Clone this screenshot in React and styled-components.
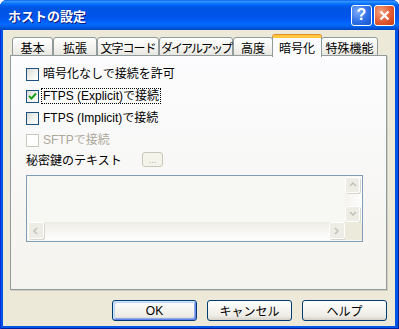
import styled, { createGlobalStyle } from "styled-components";

const GlobalStyle = createGlobalStyle`
  html, body {
    margin: 0;
    padding: 0;
    background: #ffffff;
  }
  body {
    font-family: "Liberation Sans", "Noto Sans CJK JP", sans-serif;
    font-size: 12px;
    color: #000;
  }
`;

const Window = styled.div`
  width: 399px;
  height: 329px;
  display: flex;
  flex-direction: column;
  background: #0055e5;
  border-radius: 7px 7px 0 0;
  box-shadow: inset 1px 0 0 #0831d9, inset -1px 0 0 #001ea0, inset 0 -1px 0 #001ea0;
  overflow: hidden;
`;

const TitleBar = styled.div`
  height: 30px;
  flex: none;
  display: flex;
  align-items: center;
  padding: 0 4px 0 8px;
  background: linear-gradient(
    to bottom,
    #0058ee 0%,
    #3593ff 4%,
    #288eff 7%,
    #127dff 10%,
    #036ffc 14%,
    #0262ee 18%,
    #0057e5 24%,
    #0054e3 30%,
    #0055eb 56%,
    #005bf5 68%,
    #026afe 80%,
    #0062ef 88%,
    #0052d6 94%,
    #0046c0 100%
  );
`;

const Title = styled.div`
  flex: 1;
  color: #fff;
  font-weight: bold;
  font-size: 13px;
  text-shadow: 1px 1px 0 #0a1883;
  padding-top: 1px;
`;

const CaptionButton = styled.div`
  width: 21px;
  height: 21px;
  box-sizing: border-box;
  margin-left: 2px;
  border: 1px solid #fff;
  border-radius: 3px;
  display: flex;
  align-items: center;
  justify-content: center;
  background: ${(p) =>
    p.$close
      ? "radial-gradient(circle at 30% 30%, #f2a27f 0%, #e25b33 55%, #c43b14 100%)"
      : "radial-gradient(circle at 30% 30%, #7faaf7 0%, #2c6fe8 55%, #1752c7 100%)"};
  color: #fff;
  font-weight: bold;
  font-size: 16px;
  font-family: "Liberation Sans", sans-serif;
`;

const Client = styled.div`
  flex: 1;
  margin: 0 4px 3px 3px;
  background: #ece9d8;
  display: flex;
  flex-direction: column;
  padding: 5px 8px 0 7px;
`;

const TabRow = styled.div`
  display: flex;
  align-items: flex-end;
  height: 21px;
  padding-left: 2px;
  position: relative;
  z-index: 1;
  margin-bottom: -1px;
`;

const Tab = styled.div`
  width: ${(p) => p.$w}px;
  box-sizing: border-box;
  height: ${(p) => (p.$active ? 22 : 19)}px;
  margin: ${(p) => (p.$active ? "0 -1px -1px -1px" : "0")};
  display: flex;
  align-items: center;
  justify-content: center;
  white-space: nowrap;
  letter-spacing: ${(p) => p.$ls || 0}px;
  border: 1px solid #919b9c;
  border-bottom: ${(p) => (p.$active ? "none" : "1px solid #919b9c")};
  border-top: ${(p) => (p.$active ? "3px solid #ffc83c" : "1px solid #919b9c")};
  border-radius: 3px 3px 0 0;
  background: ${(p) =>
    p.$active ? "#fcfcfe" : "linear-gradient(to bottom, #ffffff, #f3f2ee 60%, #e7e6e0)"};
  box-shadow: ${(p) => (p.$active ? "0 -1px 0 #e68b2c" : "none")};
  font-size: 12px;
  padding-top: ${(p) => (p.$active ? 0 : 1)}px;
  z-index: ${(p) => (p.$active ? 2 : 0)};
  position: relative;
`;

const Panel = styled.div`
  height: 235px;
  box-sizing: border-box;
  border: 1px solid #919b9c;
  background: linear-gradient(to bottom, #fcfcfe, #f4f3ee);
  box-shadow: 1px 1px 0 #d0cec0;
  padding: 7px 0 0 15px;
  display: flex;
  flex-direction: column;
`;

const CheckRow = styled.label`
  display: flex;
  align-items: center;
  height: 22px;
  gap: 3px;
  color: ${(p) => (p.$disabled ? "#aca899" : "#000")};
`;

const Box = styled.span`
  width: 13px;
  height: 13px;
  box-sizing: border-box;
  border: 1px solid ${(p) => (p.$disabled ? "#cac8bb" : "#1c5180")};
  background: ${(p) =>
    p.$disabled ? "#fff" : "linear-gradient(135deg, #dcdcd7 0%, #f4f4f0 60%, #ffffff 100%)"};
  display: flex;
  align-items: center;
  justify-content: center;
  flex: none;
`;

const Label = styled.span`
  padding: 0 1px;
  line-height: 14px;
  outline: ${(p) => (p.$focus ? "1px dotted #000" : "none")};
`;

const KeyRow = styled.div`
  display: flex;
  align-items: flex-start;
  height: 22px;
`;

const KeyLabel = styled.span`
  width: 116px;
`;

const SmallButton = styled.div`
  width: 21px;
  height: 15px;
  margin-top: 1px;
  box-sizing: border-box;
  border: 1px solid #c9c7ba;
  border-radius: 3px;
  background: #f5f4ea;
  color: #aca899;
  font-size: 9px;
  display: flex;
  align-items: center;
  justify-content: center;
`;

const TextBox = styled.div`
  width: 337px;
  height: 67px;
  box-sizing: border-box;
  margin-top: 2px;
  border: 1px solid #7f9db9;
  background: #f7f7f3;
  display: grid;
  grid-template-columns: 1fr 17px;
  grid-template-rows: 1fr 18px;
  padding: 1px 0 1px 1px;
`;

const VScroll = styled.div`
  display: flex;
  flex-direction: column;
  background: linear-gradient(to right, #f4f3ee, #fefefe);
`;

const HScroll = styled.div`
  display: flex;
  background: linear-gradient(to bottom, #eeede5, #fefefe);
`;

const Track = styled.div`
  flex: 1;
`;

const Corner = styled.div`
  background: #ebeadb;
`;

const ArrowBtn = styled.div`
  width: ${(p) => (p.$h ? 16 : 15)}px;
  height: ${(p) => (p.$h ? 17 : 16)}px;
  box-sizing: border-box;
  border: 1px solid #fff;
  border-radius: 2px;
  background: #eeede5;
  box-shadow: 1px 1px 0 #d8d6cc;
  display: flex;
  align-items: center;
  justify-content: center;
`;

const Footer = styled.div`
  display: flex;
  justify-content: flex-end;
  gap: 10px;
  padding: 10px 0 0 0;
`;

const Button = styled.div`
  width: 85px;
  height: 21px;
  box-sizing: border-box;
  border: 1px solid #003c74;
  border-radius: 3px;
  background: linear-gradient(to bottom, #ffffff 0%, #f4f3ee 50%, #ecebe6 80%, #d6d0c5 100%);
  box-shadow: ${(p) =>
    p.$default ? "inset 1px 1px 0 #cee7ff, inset -1px -1px 0 #6982ee, inset 2px 2px 0 #bcd4f6, inset -2px -2px 0 #89ade4" : "none"};
  display: flex;
  align-items: center;
  justify-content: center;
  font-size: 12px;
`;

const Arrow = ({ dir }) => {
  const paths = {
    up: "M1 5 L4 2 L7 5",
    down: "M1 2 L4 5 L7 2",
    left: "M5 1 L2 4 L5 7",
    right: "M2 1 L5 4 L2 7",
  };
  return (
    <svg width="8" height="8" viewBox="0 0 8 8">
      <path d={paths[dir]} fill="none" stroke="#c4c3bb" strokeWidth="1.6" />
    </svg>
  );
};

const Check = () => (
  <svg width="9" height="9" viewBox="0 0 9 9">
    <path d="M1 4 L3.5 6.5 L8 1.5" fill="none" stroke="#21a121" strokeWidth="2" />
  </svg>
);

const tabs = [
  { label: "基本", w: 41 },
  { label: "拡張", w: 44 },
  { label: "文字コード", w: 62, ls: -1 },
  { label: "ダイアルアップ", w: 74, ls: -2 },
  { label: "高度", w: 40 },
  { label: "暗号化", w: 50, active: true },
  { label: "特殊機能", w: 57 },
];

export default function App() {
  return (
    <>
      <GlobalStyle />
      <Window>
        <TitleBar>
          <Title>ホストの設定</Title>
          <CaptionButton>?</CaptionButton>
          <CaptionButton $close>
            <svg width="11" height="11" viewBox="0 0 11 11">
              <path d="M1.5 1.5 L9.5 9.5 M9.5 1.5 L1.5 9.5" stroke="#fff" strokeWidth="2.2" />
            </svg>
          </CaptionButton>
        </TitleBar>
        <Client>
          <TabRow>
            {tabs.map((t) => (
              <Tab key={t.label} $w={t.w} $ls={t.ls} $active={t.active}>
                {t.label}
              </Tab>
            ))}
          </TabRow>
          <Panel>
            <CheckRow>
              <Box />
              <Label>暗号化なしで接続を許可</Label>
            </CheckRow>
            <CheckRow>
              <Box>
                <Check />
              </Box>
              <Label $focus>FTPS (Explicit)で接続</Label>
            </CheckRow>
            <CheckRow>
              <Box />
              <Label>FTPS (Implicit)で接続</Label>
            </CheckRow>
            <CheckRow $disabled>
              <Box $disabled />
              <Label>SFTPで接続</Label>
            </CheckRow>
            <KeyRow>
              <KeyLabel>秘密鍵のテキスト</KeyLabel>
              <SmallButton>...</SmallButton>
            </KeyRow>
            <TextBox>
              <div />
              <VScroll>
                <ArrowBtn>
                  <Arrow dir="up" />
                </ArrowBtn>
                <Track />
                <ArrowBtn>
                  <Arrow dir="down" />
                </ArrowBtn>
              </VScroll>
              <HScroll>
                <ArrowBtn $h>
                  <Arrow dir="left" />
                </ArrowBtn>
                <Track />
                <ArrowBtn $h>
                  <Arrow dir="right" />
                </ArrowBtn>
              </HScroll>
              <Corner />
            </TextBox>
          </Panel>
          <Footer>
            <Button $default>OK</Button>
            <Button>キャンセル</Button>
            <Button>ヘルプ</Button>
          </Footer>
        </Client>
      </Window>
    </>
  );
}
